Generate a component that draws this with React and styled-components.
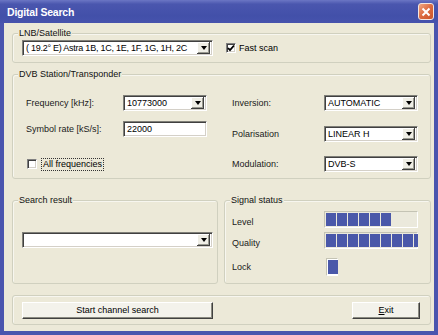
import styled, { createGlobalStyle } from 'styled-components';

const GlobalStyle = createGlobalStyle`
  html, body {
    margin: 0;
    padding: 0;
    background: #ece9d8;
  }
  body {
    font-family: "Liberation Sans", Arial, sans-serif;
    font-size: 9px;
    color: #000;
  }
  * {
    box-sizing: border-box;
  }
`;

const levelBlocks = 6;
const qualityBlocks = 8.4;

function Select({ value, width, tight }) {
  return (
    <SelectBox $w={width}>
      <SelectText $tight={tight}>{value}</SelectText>
      <Arrow />
    </SelectBox>
  );
}

function Check({ checked }) {
  return (
    <CheckBox>
      {checked && (
        <svg width="8" height="8" viewBox="0 0 8 8">
          <polyline points="1,4 3,6.2 7,1.5" fill="none" stroke="#000" strokeWidth="1.8" />
        </svg>
      )}
    </CheckBox>
  );
}

function Blocks({ value }) {
  const full = Math.floor(value);
  const rest = value - full;
  const items = [];
  for (let i = 0; i < full; i++) items.push(<Block key={i} />);
  if (rest > 0) items.push(<Block key="p" style={{ width: Math.round(rest * 10) }} />);
  return <SignalTrack>{items}</SignalTrack>;
}

export default function App() {
  return (
    <>
      <GlobalStyle />
      <Window>
        <TitleBar>
          <Title>Digital Search</Title>
          <CloseButton>
            <svg width="10" height="10" viewBox="0 0 10 10">
              <path d="M1.5 1.5 L8.5 8.5 M8.5 1.5 L1.5 8.5" stroke="#fff" strokeWidth="2" />
            </svg>
          </CloseButton>
        </TitleBar>
        <Body>
          <LnbGroup>
            <Legend>LNB/Satellite</Legend>
            <Select width={191} tight value="( 19.2° E) Astra 1B, 1C, 1E, 1F, 1G, 1H, 2C" />
            <CheckRow $ml={13}>
              <Check checked />
              <span>Fast scan</span>
            </CheckRow>
          </LnbGroup>

          <DvbGroup>
            <Legend>DVB Station/Transponder</Legend>
            <Column>
              <Row>
                <Label $w={97}>Frequency [kHz]:</Label>
                <Select width={84} value="10773000" />
              </Row>
              <Row $mt={10}>
                <Label $w={97}>Symbol rate [kS/s]:</Label>
                <TextInput>22000</TextInput>
              </Row>
              <Row $mt={19}>
                <CheckRow $ml={1}>
                  <Check />
                  <FocusLabel>All frequencies</FocusLabel>
                </CheckRow>
              </Row>
            </Column>
            <Column>
              <Row>
                <Label $w={92}>Inversion:</Label>
                <Select width={94} value="AUTOMATIC" />
              </Row>
              <Row $mt={15}>
                <Label $w={92}>Polarisation</Label>
                <Select width={94} value="LINEAR H" />
              </Row>
              <Row $mt={14}>
                <Label $w={92}>Modulation:</Label>
                <Select width={94} value="DVB-S" />
              </Row>
            </Column>
          </DvbGroup>

          <MiddleRow>
            <SearchGroup>
              <Legend>Search result</Legend>
              <Select value="" />
            </SearchGroup>
            <SignalGroup>
              <Legend>Signal status</Legend>
              <SignalRow>
                <SignalLabel>Level</SignalLabel>
                <Blocks value={levelBlocks} />
              </SignalRow>
              <SignalRow $mt={4}>
                <SignalLabel>Quality</SignalLabel>
                <Blocks value={qualityBlocks} />
              </SignalRow>
              <SignalRow $mt={9} $center>
                <SignalLabel>Lock</SignalLabel>
                <LockBox>
                  <Block />
                </LockBox>
              </SignalRow>
            </SignalGroup>
          </MiddleRow>

          <ButtonGroup>
            <Button $w={191}>Start channel search</Button>
            <Button $w={68}><u>E</u>xit</Button>
          </ButtonGroup>
        </Body>
      </Window>
    </>
  );
}

const Window = styled.div`
  width: 438px;
  height: 335px;
  display: flex;
  flex-direction: column;
  background: #4a55ae;
  overflow: hidden;
`;

const TitleBar = styled.div`
  height: 23px;
  flex-shrink: 0;
  display: flex;
  align-items: center;
  justify-content: space-between;
  padding: 0 4px 0 7px;
  background: linear-gradient(#6b76c4 0%, #4a56ae 18%, #4250a9 70%, #4753ad 100%);
`;

const Title = styled.div`
  font-family: "Liberation Sans", Arial, sans-serif;
  font-size: 10.5px;
  font-weight: 700;
  color: #fff;
  letter-spacing: -0.2px;
  padding-top: 1px;
`;

const CloseButton = styled.div`
  width: 16px;
  height: 17px;
  display: flex;
  align-items: center;
  justify-content: center;
  border: 1px solid #f4e6e0;
  border-radius: 3px;
  background: linear-gradient(135deg, #f0a884 0%, #dc6a40 50%, #c9542a 100%);
`;

const Body = styled.div`
  flex: 1;
  margin: 0 4px 4px 4px;
  background: #ece9d8;
  padding: 10px 3px 0 8px;
  display: flex;
  flex-direction: column;
`;

const Group = styled.div`
  position: relative;
  border: 1px solid #d0d0bf;
  border-radius: 3px;
  box-shadow: inset 1px 1px 0 #f7f6ef;
`;

const Legend = styled.span`
  position: absolute;
  top: -6px;
  left: 5px;
  padding: 0 1px;
  line-height: 11px;
  background: #ece9d8;
  color: #111;
`;

const LnbGroup = styled(Group)`
  height: 30px;
  display: flex;
  align-items: center;
  padding: 0 0 0 9px;
`;

const DvbGroup = styled(Group)`
  height: 105px;
  margin-top: 11px;
  display: grid;
  grid-template-columns: 206px 1fr;
  padding: 20px 0 0 13px;
`;

const Column = styled.div`
  display: flex;
  flex-direction: column;
`;

const Row = styled.div`
  height: 16px;
  display: flex;
  align-items: center;
  margin-top: ${(p) => p.$mt || 0}px;
`;

const Label = styled.span`
  width: ${(p) => p.$w}px;
  flex-shrink: 0;
  white-space: nowrap;
  color: #1a1a1a;
`;

const SelectBox = styled.div`
  width: ${(p) => (p.$w ? `${p.$w}px` : 'auto')};
  flex: ${(p) => (p.$w ? '0 0 auto' : '1')};
  height: 16px;
  display: flex;
  align-items: center;
  background: #fff;
  border: 1px solid;
  border-color: #7f7f78 #fff #fff #7f7f78;
  box-shadow: inset 1px 1px 0 #404040, inset -1px -1px 0 #d4d0c8;
  padding: 1px 2px 2px 1px;
`;

const SelectText = styled.span`
  flex: 1;
  padding-left: 2px;
  white-space: nowrap;
  overflow: hidden;
  letter-spacing: ${(p) => (p.$tight ? '-0.25px' : '0')};
`;

const Arrow = styled.span`
  width: 13px;
  height: 12px;
  flex-shrink: 0;
  display: flex;
  align-items: center;
  justify-content: center;
  background: #efeee6;
  box-shadow: inset -1px -1px 0 #404040, inset 1px 1px 0 #fff, inset -2px -2px 0 #9a9a90;
  &::after {
    content: '';
    border-left: 3.5px solid transparent;
    border-right: 3.5px solid transparent;
    border-top: 4px solid #000;
    margin-top: 1px;
  }
`;

const TextInput = styled(SelectBox).attrs({ $w: 84 })`
  padding-left: 3px;
`;

const CheckRow = styled.div`
  display: flex;
  align-items: center;
  gap: 3px;
  margin-left: ${(p) => p.$ml || 0}px;
`;

const CheckBox = styled.span`
  width: 10px;
  height: 10px;
  display: flex;
  align-items: center;
  justify-content: center;
  background: #fff;
  border: 1px solid;
  border-color: #808080 #fff #fff #808080;
  box-shadow: inset 1px 1px 0 #404040, inset -1px -1px 0 #d4d0c8;
`;

const FocusLabel = styled.span`
  border: 1px dotted #333;
  padding: 0 1px;
  margin-left: 1px;
  line-height: 11px;
`;

const MiddleRow = styled.div`
  display: flex;
  gap: 6px;
  margin-top: 21px;
`;

const SearchGroup = styled(Group)`
  width: 206px;
  height: 84px;
  padding: 31px 4px 0 9px;
  display: flex;
  align-items: flex-start;
`;

const SignalGroup = styled(Group)`
  width: 207px;
  height: 84px;
  padding: 10px 0 0 7px;
  display: flex;
  flex-direction: column;
`;

const SignalRow = styled.div`
  display: flex;
  align-items: ${(p) => (p.$center ? 'center' : 'flex-end')};
  margin-top: ${(p) => p.$mt || 0}px;
`;

const SignalLabel = styled.span`
  width: 92px;
  flex-shrink: 0;
  padding-bottom: 1px;
  color: #1a1a1a;
`;

const SignalTrack = styled.div`
  width: 94px;
  height: 17px;
  display: flex;
  gap: 1px;
  padding: 1px;
  background: #ebe9dc;
  border: 1px solid;
  border-color: #c4c3b4 #fff #fff #c4c3b4;
`;

const Block = styled.span`
  width: 10px;
  height: 100%;
  flex-shrink: 0;
  background: #4a58a9;
`;

const LockBox = styled.div`
  width: 12px;
  height: 18px;
  margin-left: 2px;
  padding: 1px;
  display: flex;
  background: #fff;
  border: 1px solid;
  border-color: #c4c3b4 #fff #fff #c4c3b4;
`;

const ButtonGroup = styled(Group)`
  height: 30px;
  margin-top: 11px;
  display: flex;
  align-items: center;
  justify-content: space-between;
  padding: 0 10px 0 9px;
`;

const Button = styled.div`
  width: ${(p) => p.$w}px;
  height: 17px;
  display: flex;
  align-items: center;
  justify-content: center;
  background: #f3f2eb;
  border: 1px solid;
  border-color: #fff #404040 #404040 #fff;
  box-shadow: inset -1px -1px 0 #8a8a80;
`;
